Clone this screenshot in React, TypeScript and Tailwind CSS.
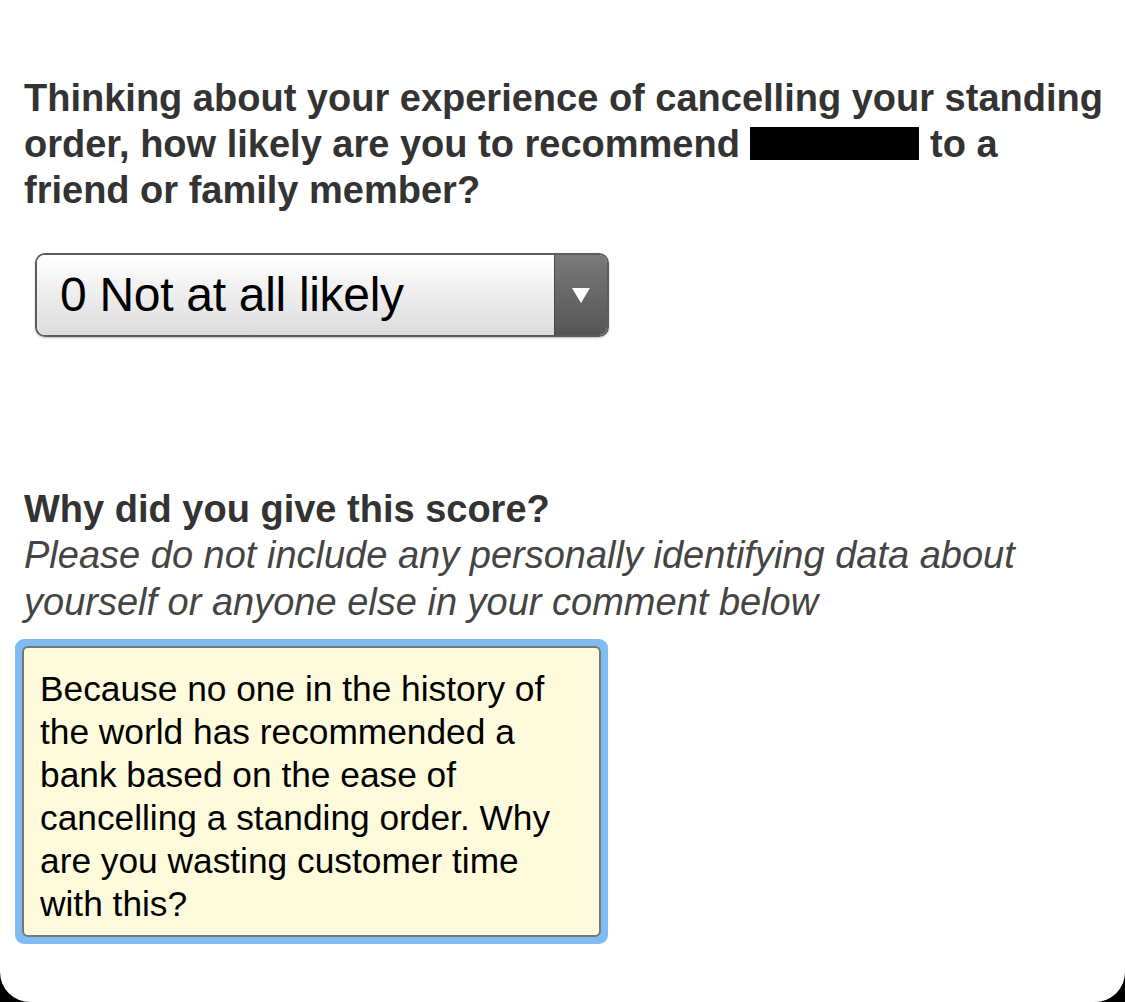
import React from "react";

const comment =
  "Because no one in the history of the world has recommended a bank based on the ease of cancelling a standing order. Why are you wasting customer time with this?";

function ScoreSelect() {
  return (
    <div className="flex h-[84px] w-[574px] overflow-hidden rounded-[10px] border-2 border-[#5c5c5c] shadow-[0_1px_2px_rgba(0,0,0,0.25)]">
      <div className="flex flex-1 items-center bg-gradient-to-b from-white to-[#dcdcdc] pl-[23px] text-[48px] leading-none tracking-[-0.3px] text-black">
        0 Not at all likely
      </div>
      <div className="flex w-[53px] items-center justify-center border-l border-[#4a4a4a] bg-gradient-to-b from-[#7a7a7a] to-[#555]">
        <svg width="20" height="17" viewBox="0 0 20 17">
          <path d="M1 1h18L10 16z" fill="#fff" />
        </svg>
      </div>
    </div>
  );
}

export default function App() {
  return (
    <div
      className="min-h-[1002px] w-[1125px] bg-black"
      style={{ fontFamily: '"Liberation Sans", Arial, sans-serif' }}
    >
      <div className="h-[1002px] rounded-b-[30px] bg-white pl-[24px] pr-[8px] pt-[75px]">
        <h1 className="whitespace-nowrap text-[38px] font-bold leading-[46px] text-[#333]">
          Thinking about your experience of cancelling your standing
          <br />
          order, how likely are you to recommend{" "}
          <span className="inline-block h-[33px] w-[169px] translate-y-[3px] bg-black align-baseline" />{" "}
          to a
          <br />
          friend or family member?
        </h1>

        <div className="mt-[40px] pl-[11px]">
          <ScoreSelect />
        </div>

        <h2 className="mt-[149px] text-[38px] font-bold leading-[46px] text-[#333]">
          Why did you give this score?
        </h2>
        <p className="whitespace-nowrap text-[38px] italic leading-[47px] text-[#444]">
          Please do not include any personally identifying data about
          <br />
          yourself or anyone else in your comment below
        </p>

        <div className="ml-[-9px] mt-[13px] w-[593px] rounded-[9px] bg-[#80bcf2] p-[7px]">
          <div className="h-[291px] rounded-[6px] border-2 border-[#777] bg-[#fdfbdc] px-[16px] pt-[19px] text-[35.3px] leading-[43px] text-black">
            {comment}
          </div>
        </div>
      </div>
    </div>
  );
}
